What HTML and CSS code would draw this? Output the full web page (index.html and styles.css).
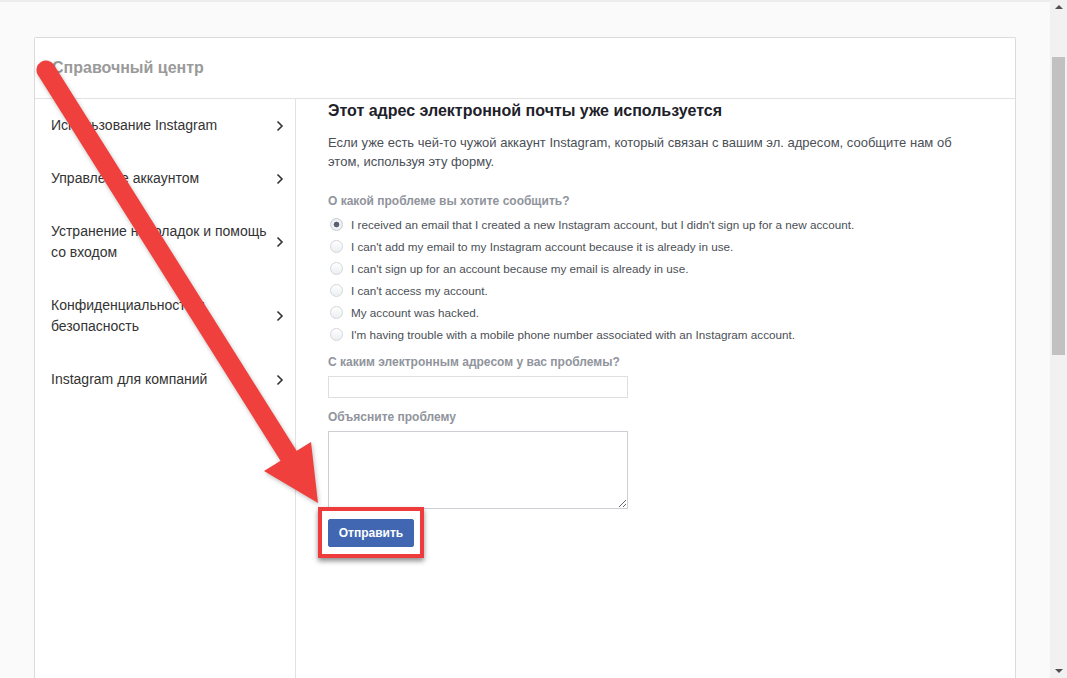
FILE: index.html
```html
<!DOCTYPE html>
<html lang="ru">
<head>
    <meta charset="UTF-8">
    <meta name="viewport" content="width=device-width, initial-scale=1.0">
    <title>Справочный центр</title>
    <link rel="stylesheet" href="styles.css">
</head>
<body>
  <div class="page">
    <div class="viewport">
      <div class="card">
        <div class="card-header">Справочный центр</div>
        <div class="card-body">
          <nav class="sidebar">
            <a class="nav-item"><span class="nav-text">Использование Instagram</span><svg class="chevron" viewBox="0 0 8 12"><path d="M1.5 1.5 L6 6 L1.5 10.5"/></svg></a>
            <a class="nav-item"><span class="nav-text">Управление аккаунтом</span><svg class="chevron" viewBox="0 0 8 12"><path d="M1.5 1.5 L6 6 L1.5 10.5"/></svg></a>
            <a class="nav-item"><span class="nav-text">Устранение неполадок и помощь со входом</span><svg class="chevron" viewBox="0 0 8 12"><path d="M1.5 1.5 L6 6 L1.5 10.5"/></svg></a>
            <a class="nav-item"><span class="nav-text">Конфиденциальность и безопасность</span><svg class="chevron" viewBox="0 0 8 12"><path d="M1.5 1.5 L6 6 L1.5 10.5"/></svg></a>
            <a class="nav-item"><span class="nav-text">Instagram для компаний</span><svg class="chevron" viewBox="0 0 8 12"><path d="M1.5 1.5 L6 6 L1.5 10.5"/></svg></a>
          </nav>

          <main class="content">
            <h1>Этот адрес электронной почты уже используется</h1>
            <p class="intro">Если уже есть чей-то чужой аккаунт Instagram, который связан с вашим эл. адресом, сообщите нам об этом, используя эту форму.</p>

            <div class="field-label label-first">О какой проблеме вы хотите сообщить?</div>
            <div class="radio-list">
              <label class="radio-row"><span class="radio checked"></span>I received an email that I created a new Instagram account, but I didn't sign up for a new account.</label>
              <label class="radio-row"><span class="radio"></span>I can't add my email to my Instagram account because it is already in use.</label>
              <label class="radio-row"><span class="radio"></span>I can't sign up for an account because my email is already in use.</label>
              <label class="radio-row"><span class="radio"></span>I can't access my account.</label>
              <label class="radio-row"><span class="radio"></span>My account was hacked.</label>
              <label class="radio-row"><span class="radio"></span>I'm having trouble with a mobile phone number associated with an Instagram account.</label>
            </div>

            <div class="field-label label-email">С каким электронным адресом у вас проблемы?</div>
            <input type="text" class="text-input">

            <div class="field-label label-explain">Объясните проблему</div>
            <textarea class="text-area"></textarea>

            <div class="submit-wrap">
              <button class="submit">Отправить</button>
            </div>
          </main>
        </div>
      </div>

      <!-- annotation arrow drawn over the page -->
      <svg class="arrow" width="1050" height="678" viewBox="0 0 1050 678">
        <g class="arrow-shape">
          <line x1="46" y1="70" x2="290" y2="458" stroke="#f0403d" stroke-width="19" stroke-linecap="round"/>
          <polygon points="264,471 311,442 318,503" fill="#f0403d"/>
        </g>
      </svg>
    </div>

    <div class="scrollbar">
      <span class="scroll-up"></span>
      <div class="scroll-track"><div class="scroll-thumb"></div></div>
      <span class="scroll-down"></span>
    </div>
  </div>
</body>
</html>
```

FILE: styles.css
```css
* {
  box-sizing: border-box;
}

body {
  margin: 0;
  font-family: "Liberation Sans", Arial, sans-serif;
  background-color: #fafafa;
  overflow: hidden;
}

.page {
  display: flex;
  height: 678px;
  border-top: 2px solid #ececec;
}

.viewport {
  position: relative;
  flex: 1;
  display: flex;
  flex-direction: column;
  padding: 35px 0 0 34px;
}

.card {
  flex: 1;
  display: flex;
  flex-direction: column;
  width: 982px;
  background-color: #fff;
  border: 1px solid #dbdbdb;
  border-bottom: none;
  border-radius: 2px 2px 0 0;
}

.card-header {
  height: 61px;
  padding-left: 17px;
  display: flex;
  align-items: center;
  border-bottom: 1px solid #e2e2e2;
  font-size: 16px;
  font-weight: bold;
  color: #9a9a9a;
}

.card-body {
  flex: 1;
  display: flex;
}

/* left menu */
.sidebar {
  width: 261px;
  border-right: 1px solid #e2e2e2;
}

.nav-item {
  display: flex;
  align-items: center;
  padding: 16px 11px 16px 16px;
  font-size: 14px;
  line-height: 21px;
  color: #333;
}

.nav-text {
  flex: 1;
  padding-right: 6px;
}

.chevron {
  width: 8px;
  height: 12px;
  fill: none;
  stroke: #333;
  stroke-width: 1.6;
}

/* form */
.content {
  flex: 1;
  padding: 2px 32px 0 32px;
}

h1 {
  margin: 0;
  font-size: 16px;
  line-height: 20px;
  color: #1d2129;
}

.intro {
  margin: 12px 0 0 0;
  font-size: 13px;
  line-height: 19px;
  color: #4b4f56;
}

.field-label {
  font-size: 12px;
  font-weight: bold;
  line-height: 16px;
  color: #90949c;
}

.label-first {
  margin-top: 22px;
}

.radio-list {
  margin-top: 4px;
}

.radio-row {
  display: flex;
  align-items: center;
  height: 22px;
  font-size: 11.7px;
  color: #4b4f56;
}

.radio {
  width: 13px;
  height: 13px;
  margin: 0 8px 0 2px;
  border: 1px solid #d3d6db;
  border-radius: 50%;
  background: linear-gradient(#fff, #eceef1);
}

.radio.checked {
  background: radial-gradient(circle, #5b6170 0, #5b6170 2.5px, #f3f4f6 3.2px, #e9ebee 100%);
  border-color: #c5c9d0;
}

.label-email {
  margin-top: 9px;
}

.text-input {
  display: block;
  width: 300px;
  height: 22px;
  margin-top: 6px;
  border: 1px solid #dddfe2;
}

.label-explain {
  margin-top: 11px;
}

.text-area {
  display: block;
  width: 300px;
  height: 78px;
  margin-top: 6px;
  border: 1px solid #ccd0d5;
  font-family: inherit;
}

.submit-wrap {
  position: relative;
  margin-top: 10px;
  width: 86px;
}

.submit {
  display: block;
  width: 86px;
  height: 28px;
  padding: 0;
  background-color: #4267b2;
  color: #fff;
  border: 1px solid #4267b2;
  border-radius: 2px;
  font-family: inherit;
  font-size: 12px;
  font-weight: bold;
}

/* red frame round the button */
.submit-wrap::after {
  content: "";
  position: absolute;
  top: -12px;
  left: -10px;
  right: -10px;
  bottom: -11px;
  border: 4px solid #ee3b3b;
  box-shadow: 0 3px 5px rgba(0, 0, 0, 0.45);
}

.arrow {
  position: absolute;
  top: -2px;
  left: 0;
  pointer-events: none;
}

.arrow-shape {
  filter: drop-shadow(1px 2px 2px rgba(0, 0, 0, 0.25));
}

/* fake browser scrollbar */
.scrollbar {
  width: 17px;
  display: flex;
  flex-direction: column;
  align-items: center;
  background-color: #f1f1f1;
  margin-top: -2px;
}

.scroll-up,
.scroll-down {
  width: 0;
  height: 0;
  border-left: 4px solid transparent;
  border-right: 4px solid transparent;
  margin: 5px 0;
}

.scroll-up {
  border-bottom: 4px solid #505050;
}

.scroll-down {
  border-top: 4px solid #505050;
}

.scroll-track {
  flex: 1;
  width: 100%;
  padding: 43px 2px 0 2px;
}

.scroll-thumb {
  height: 298px;
  background-color: #c1c1c1;
}
```
